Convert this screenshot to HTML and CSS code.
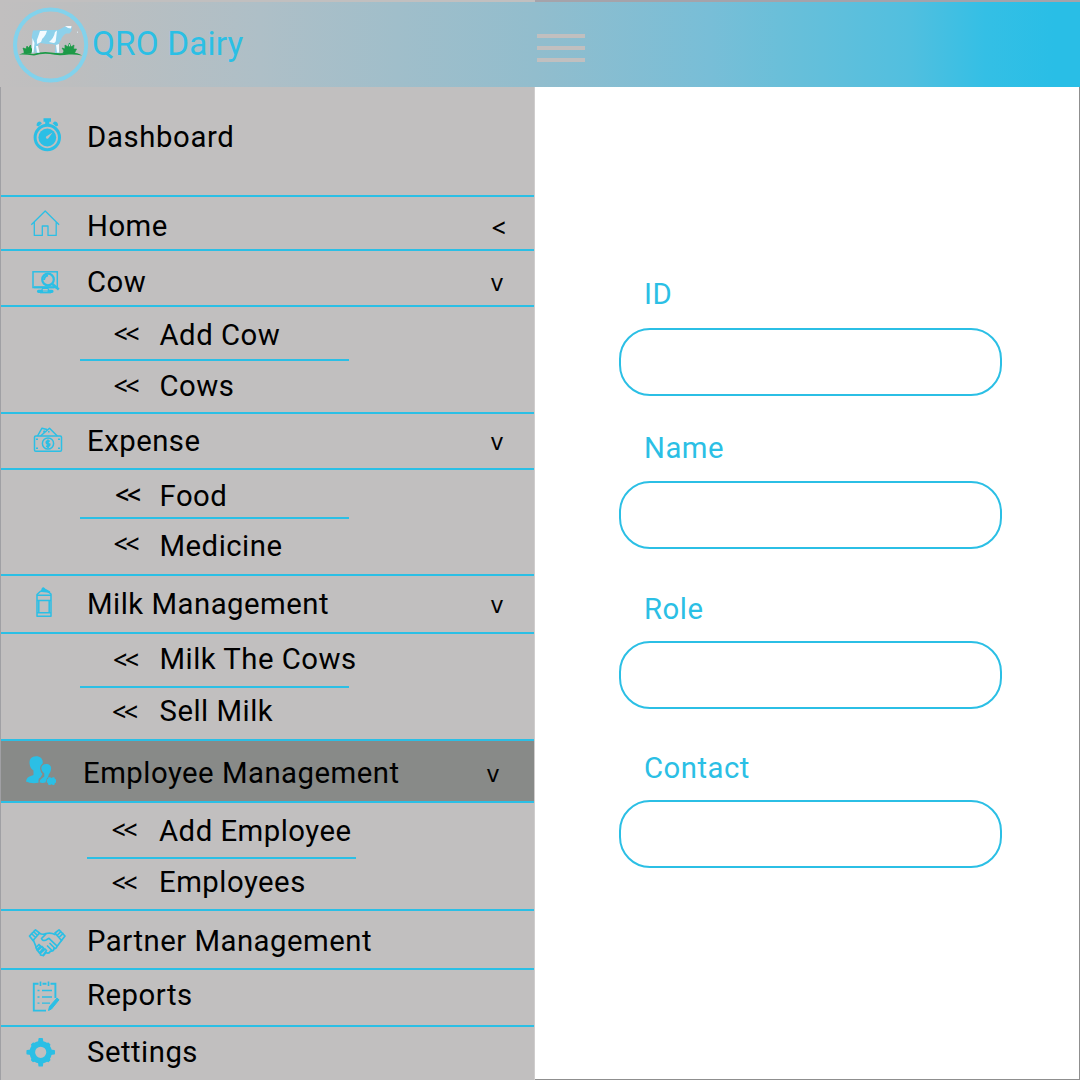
FILE: index.html
```html
<!DOCTYPE html>
<html lang="en">
<head>
<meta charset="utf-8">
<title>QRO Dairy</title>
<link rel="stylesheet" href="styles.css">
</head>
<body>
<div class="app">
  <header class="topbar">
    <a class="brand">
      <svg class="logo" viewBox="10 5 80 80">
        <circle cx="50.6" cy="45" r="35.6" fill="none" stroke="#82d2ec" stroke-width="4"/>
        <path d="M19 54.5Q25 52 33 54Q43 51 51 52.5Q60 54 70 52.5Q77 52 82 55.5Q75 54 69 54.5Q58 56 50 54Q42 53 34 55.5Q25 54 19 54.5Z" fill="#1d9a48"/>
        <path d="M24 53l0-2-1-3 3 1 1-3 1.500 2 2-3 .5 4 2-1-2 5zM63 53l1-2-2-3 3 1 0-4 3 2 1.500-4 1.500 4 3-2-.5 4 3 0-2 4z" fill="#1d9a48" stroke="#1d9a48" stroke-width=".7"/>
        <path d="M33 30.5Q40 29.600 48 30L58 30Q62 28 65 26.500L72 26.5 71.500 31 69.500 33.500 66 33.500Q62 36 61 40L58.500 44 59.500 53 55 53 55.500 45 52 44 47 44 40 43 38 46 39.500 53 35.500 53 35 48 34 53 31.800 53 32.500 43 31.700 37Z" fill="#8dd1eb"/>
        <path d="M40 31L47 30.800Q46 35 44 37Q42 38 41 42L37 44Q36 40 38 37ZM55 32L57 30.500 56 39Q56 43 53.500 43L49 42Q54 38 55 32ZM32.500 38L34.500 43 33.500 52.500 32 52.500ZM56 45L59 44 59 52.500 57 52.500ZM65 26L71.500 26 71 28.500 68 28ZM36 46L38 46 39.500 52.500 37 52.500ZM69 45l1-1 0 3z" fill="#f4fbff"/>
        <path d="M77 31.500l.8 0 0 1.500-.8 0z" fill="#d9eef8"/>
      </svg>
      <span class="brand-name">QRO Dairy</span>
    </a>
    <div class="menu-button"><span></span><span></span><span></span></div>
  </header>
  <nav class="sidebar">
    <div class="row dashboard">
      <svg class="icon" viewBox="0 115 86 44" fill="#2bbfe5">
        <circle cx="47.300" cy="137.500" r="12.200" fill="none" stroke="#2bbfe5" stroke-width="3"/>
        <circle cx="47.300" cy="137.500" r="8.900"/>
        <path d="M43.500 118.300h7.500v3.500h-1.700v2.500h-4.100v-2.500H43.500zM36.500 125.500Q36.700 121.500 40 121.500L42 123.300 38.500 126.500zM58.100 125.500Q57.900 121.500 54.600 121.500L52.600 123.300 56.100 126.500z"/>
        <path d="M52.500 132.500l-6.300 4q-.8 1.200.2 2t2-.2z" fill="#c1bfbf"/>
      </svg>
      <span class="label">Dashboard</span>
    </div>
    <div class="row home">
      <svg class="icon" viewBox="0 204 86 44" fill="none" stroke="#2bbfe5" stroke-width="1.300" stroke-linejoin="round">
        <path d="M31.300 224.700L45.200 211 59.100 224.700M34.300 222V235.400H42.300V226H48V235.400H56.200V222"/>
      </svg>
      <span class="label">Home</span><span class="caret caret-left">&lt;</span>
    </div>
    <div class="row cow">
      <svg class="icon" viewBox="0 260 86 44" fill="none" stroke="#2bbfe5">
        <rect x="33" y="271.800" width="24.300" height="15.700" stroke-width="1.500"/>
        <path d="M34 287.200h20" stroke-width="2"/>
        <path d="M42.500 288.500h5.500l1 2.500h-7.500z" fill="#c1bfbf" stroke-width="1.200"/>
        <path d="M38.500 291.300h3M49 291.300h3" stroke-width="3.200" stroke-linecap="round"/>
        <path d="M40 292.600h11" stroke-width="1.500"/>
        <circle cx="48" cy="279.500" r="5.800" fill="#c1bfbf" stroke-width="2.200"/>
        <path d="M44 280q.5-4 4-4.500" stroke-width="2"/>
        <path d="M52.300 284l6.500 5.500" stroke-width="2.500"/>
      </svg>
      <span class="label">Cow</span><span class="caret">v</span>
    </div>
    <div class="submenu cow-sub">
      <div class="sub"><span class="arrows">&lt;&lt;</span><span>Add Cow</span></div>
      <div class="sub"><span class="arrows">&lt;&lt;</span><span>Cows</span></div>
    </div>
    <div class="row expense">
      <svg class="icon" viewBox="0 419 86 44" fill="none" stroke="#2bbfe5" stroke-width="1.500" stroke-linejoin="round">
        <rect x="34.500" y="436" width="27" height="15.300" rx="1.300"/>
        <circle cx="48" cy="443.500" r="5.600"/>
        <path d="M49.800 441.200q-3.500-1-3.500 1t3.500 2q0 2.500-3.700 2M48 439.500v8.500" stroke-width="1.700"/>
        <path d="M37.500 436L42 428.200 47 429.500M40.500 436L49.500 428.300 57.300 436M48.800 431v1.500M44.500 430.500l-1 2"/>
        <path d="M37 438.500v1.500M59 438.500v1.500M37 447.500v1.500M59 447.500v1.500" stroke-width="2"/>
      </svg>
      <span class="label">Expense</span><span class="caret">v</span>
    </div>
    <div class="submenu expense-sub">
      <div class="sub"><span class="arrows arrows-bold">&lt;&lt;</span><span>Food</span></div>
      <div class="sub"><span class="arrows">&lt;&lt;</span><span>Medicine</span></div>
    </div>
    <div class="row milk">
      <svg class="icon" viewBox="0 582 86 44" fill="none" stroke="#2bbfe5" stroke-width="1.500" stroke-linejoin="round">
        <path d="M37 616.200V594.500L40.500 591.300H47.500L51 594V616.200Z"/>
        <path d="M37 595.300H51M37 600.500H51M38.800 600.500V612.800M49.200 600.500V612.800M37 612.800H51"/>
        <path d="M41.500 591.300L42.500 588.500 43.500 588 45 589.300 49.500 592Z" fill="#2bbfe5"/>
      </svg>
      <span class="label">Milk Management</span><span class="caret">v</span>
    </div>
    <div class="submenu milk-sub">
      <div class="sub"><span class="arrows">&lt;&lt;</span><span>Milk The Cows</span></div>
      <div class="sub"><span class="arrows">&lt;&lt;</span><span>Sell Milk</span></div>
    </div>
    <div class="row employee active">
      <svg class="icon" viewBox="0 751 86 44" fill="#2bbfe5">
        <path d="M36 756.300C41 756.300 43.200 759.500 42.700 763.500Q40.300 765 40 768 40.300 772 42.500 774 40.500 778 39 778.500 38.300 780 38.500 782.800Q31 784 26 781.500 26.500 777.500 29.500 776.500L33.500 775V770.500Q30 768.500 29.500 763 29 756.800 36 756.300Z"/>
        <path d="M46.300 764C50 764 51.700 766.500 51 769.700 50.500 772.500 48.500 774 48.500 775.500L48 777Q46 779 45.500 782.500 42 783.500 39.500 782.200 39.500 779.500 42 778.200L44.300 776.500V773.500Q41.500 771.500 41.300 768.500 41.300 764 46.300 764Z"/>
        <path d="M48.500 777.300h1.700l1.300.8 1.500-.8h1.300l.7 2h1v3.500h-1l-.7 2.200h-1.300l-1.500-.8-1.300.8h-1.700l-.7-2.200h-1v-3.500h1z"/>
      </svg>
      <span class="label">Employee Management</span><span class="caret">v</span>
    </div>
    <div class="submenu employee-sub">
      <div class="sub"><span class="arrows">&lt;&lt;</span><span>Add Employee</span></div>
      <div class="sub"><span class="arrows">&lt;&lt;</span><span>Employees</span></div>
    </div>
    <div class="row partner">
      <svg class="icon" viewBox="0 919 86 44" fill="none" stroke="#2bbfe5" stroke-width="1.700" stroke-linejoin="round" stroke-linecap="round">
        <path d="M29.500 936L35.500 929.800 39.500 933 33 940.500ZM65 936L59 929.800 55 933 61.500 940.500ZM31.500 933.500l4 4M33.500 931.500l4 4M63 933.500l-4 4M61 931.500l-4 4"/>
        <path d="M39.500 933.500Q43 935 46 933.500 51 932.300 55 934.500M33.500 940.500L36.500 948M61.500 940.500L57 946.500M46 934L41.500 938.500Q42.500 941.500 46 940L49 938.300 57 946Q56.500 949 54 948.500 53.500 951.500 50.500 951 49 954 46 952.500L43.500 955.500"/>
        <path d="M36 947.500L39 944.500 40.500 946 37 950ZM37.500 950.500L42 946.500 43.500 948 39.500 953ZM40.500 953L45 949 46.500 950.500 43 955.500 40.500 955Z"/>
        <path d="M50 943.500l4.500 4.500M47.500 946l4 4"/>
      </svg>
      <span class="label">Partner Management</span>
    </div>
    <div class="row reports">
      <svg class="icon" viewBox="0 973 86 44" fill="none" stroke="#2bbfe5" stroke-width="1.900">
        <path d="M38.500 983.800H33.800V1010.600H46M42.500 983.800H46.500M50.500 983.800H55.400V998"/>
        <path d="M40.500 981.500v4.500M48.500 981.500v4.500" stroke-width="1.700"/>
        <path d="M37.500 990.500h2M42 990.500h10M37.500 997h2M42 997h10M37.500 1003.200h2M42 1003.200h8" stroke-width="1.300"/>
        <path d="M48.500 1010.500L49.500 1006.500 57 998 59 999.800 51.500 1009Z" fill="#2bbfe5" stroke-width="1"/>
      </svg>
      <span class="label">Reports</span>
    </div>
    <div class="row settings">
      <svg class="icon" viewBox="0 1030 86 44" fill="none" stroke="#2bbfe5">
        <circle cx="40.700" cy="1052.300" r="8.400" stroke-width="5.600"/>
        <path d="M38.700 1043l.5-4.200h3l.5 4.200zM38.700 1061.600l.5 4.200h3l.5-4.200zM31.400 1050.300l-4.200.5v3l4.200.5zM50 1050.300l4.200.5v3l-4.200.5zM33 1047.500l-1.300-2.800 1.500-1.500 2.800 1.300zM48.400 1047.500l1.300-2.800-1.500-1.500-2.800 1.300zM33 1057.100l-1.300 2.800 1.500 1.500 2.800-1.300zM48.400 1057.100l1.300 2.800-1.500 1.500-2.800-1.300z" fill="#2bbfe5" stroke-width="1.500" stroke-linejoin="round"/>
      </svg>
      <span class="label">Settings</span>
    </div>
  </nav>
  <main class="content">
    <form class="form">
      <label class="field"><span>ID</span><input type="text"></label>
      <label class="field"><span>Name</span><input type="text"></label>
      <label class="field"><span>Role</span><input type="text"></label>
      <label class="field"><span>Contact</span><input type="text"></label>
    </form>
  </main>
</div>
</body>
</html>
```
FILE: styles.css
```css
* { box-sizing: border-box; }

body {
  margin: 0;
  background: #fff;
  color: #000;
  font: 29.3px/36px Roboto, sans-serif;
  letter-spacing: .5px;
}

.app {
  display: grid;
  grid-template: 87px 993px / 535px 545px;
  width: 1080px;
  height: 1080px;
  overflow: hidden;
}

.topbar {
  grid-column: 1 / 3;
  display: grid;
  grid-template-columns: 535px 545px;
  border-top: 2px solid #c1bfbf;
  border-image: linear-gradient(90deg, #c1bfbf 535px, #a5a3aa 535px) 2 0 0 0;
  background: linear-gradient(90deg, #c1bfbf 0, #bdbebf 70px, #aebfc7 260px, #92bdcd 535px, #78bed7 710px, #6abfd9 780px, #51bfdf 910px, #34bfe5 985px, #29bee6 1055px);
}

.brand {
  display: flex;
  color: #2bbfe5;
  font-size: 33.3px;
  letter-spacing: .15px;
}

.logo { width: 80px; height: 80px; margin: 3px 0 0 10px; }
.brand-name { margin: 24px 0 0 2px; }

.menu-button {
  display: flex;
  flex-direction: column;
  gap: 8px;
  padding: 32px 0 0 2px;
}
.menu-button span { width: 48px; height: 4px; background: #c1bfbf; }

.sidebar {
  display: flex;
  flex-direction: column;
  background: #c1bfbf;
  border-left: 1px solid #a0a0a4;
  border-right: 1px solid #cfcdcd;
}

.row {
  display: flex;
  align-items: flex-start;
  flex: none;
  border-bottom: 2px solid #2bbfe5;
}

.icon { width: 86px; height: 44px; margin: -4px 0 0 -1px; flex: none; }
.label { flex: 1; margin-left: 1px; }

.caret {
  width: 43px;
  padding-top: 2px;
  font: 23.500px/33px "Noto Sans", sans-serif;
}
.caret-left { width: 42.500px; padding-top: 3px; font-size: 25px; font-weight: 500; }

.dashboard { height: 110px; padding-top: 32px; letter-spacing: .65px; }
.home { height: 54px; padding-top: 11px; }
.cow { height: 56px; padding-top: 13px; }
.expense { height: 56px; padding-top: 9px; }
.milk { height: 58px; padding-top: 10px; }
.employee { height: 62px; padding-top: 14px; }
.partner { height: 59px; padding-top: 12px; }
.reports { height: 57px; padding-top: 7px; }
.settings { height: 53px; padding-top: 7px; border-bottom: 0; }

.active { background: #888a88; }
.active .label { margin-left: -3px; }
.active .caret { width: 47px; }

.submenu {
  flex: none;
  border-bottom: 2px solid #2bbfe5;
}

.sub { display: flex; padding-left: 112px; }
.sub:first-child {
  background: linear-gradient(#2bbfe5, #2bbfe5) 79px 100% / 269px 2px no-repeat;
}

.arrows {
  width: 46.500px;
  padding-left: .500px;
  font: 500 25px/33px "Noto Sans", sans-serif;
  letter-spacing: -2.500px;
}
.arrows-bold { padding-left: 2px; font-weight: 600; }

.cow-sub { height: 107px; }
.cow-sub .sub:first-child { height: 54px; padding-top: 10px; }
.cow-sub .sub:last-child { padding-top: 7px; }
.cow-sub .sub:last-child .arrows { line-height: 35px; }

.expense-sub { height: 106px; }
.expense-sub .sub:first-child { height: 49px; padding-top: 8px; }
.expense-sub .sub:last-child { padding-top: 9px; }
.expense-sub .sub:last-child .arrows { line-height: 31px; }

.milk-sub { height: 107px; }
.milk-sub .sub:first-child { height: 54px; padding-top: 7px; }
.milk-sub .sub:last-child { padding-top: 5px; }
.milk-sub .arrows { padding-left: 0; line-height: 37px; }
.milk-sub .sub:last-child { padding-left: 111px; }
.milk-sub .sub:last-child .arrows { width: 47.500px; }

.employee-sub { height: 108px; }
.employee-sub .sub { padding-left: 110px; }
.employee-sub .sub:first-child { height: 56px; padding-top: 10px; background-position-x: 86px; }
.employee-sub .sub:last-child { padding-top: 5px; }
.employee-sub .arrows { width: 48px; }
.employee-sub .sub:last-child .arrows { line-height: 36px; }

.content {
  border-right: 1px solid #8f8f8f;
  border-bottom: 1px solid #8f8f8f;
}

.form {
  display: grid;
  grid-template: 152.500px 160px 159.500px 160px / 383px;
  margin: 189px 0 0 84px;
}

.field { display: flex; flex-direction: column; color: #2bbfe5; }
.field span { margin-left: 25px; }
.field:nth-child(n+2) span { padding-top: 1px; margin-bottom: -1px; }
.field:nth-child(n+3) span { padding-top: 2px; margin-bottom: -2px; }

.field input {
  height: 68px;
  margin: 16px 0 0;
  padding: 0 28px;
  border: 2px solid #2bbfe5;
  border-radius: 31px;
  outline: 0;
  background: #fff;
  font: inherit;
}
```
